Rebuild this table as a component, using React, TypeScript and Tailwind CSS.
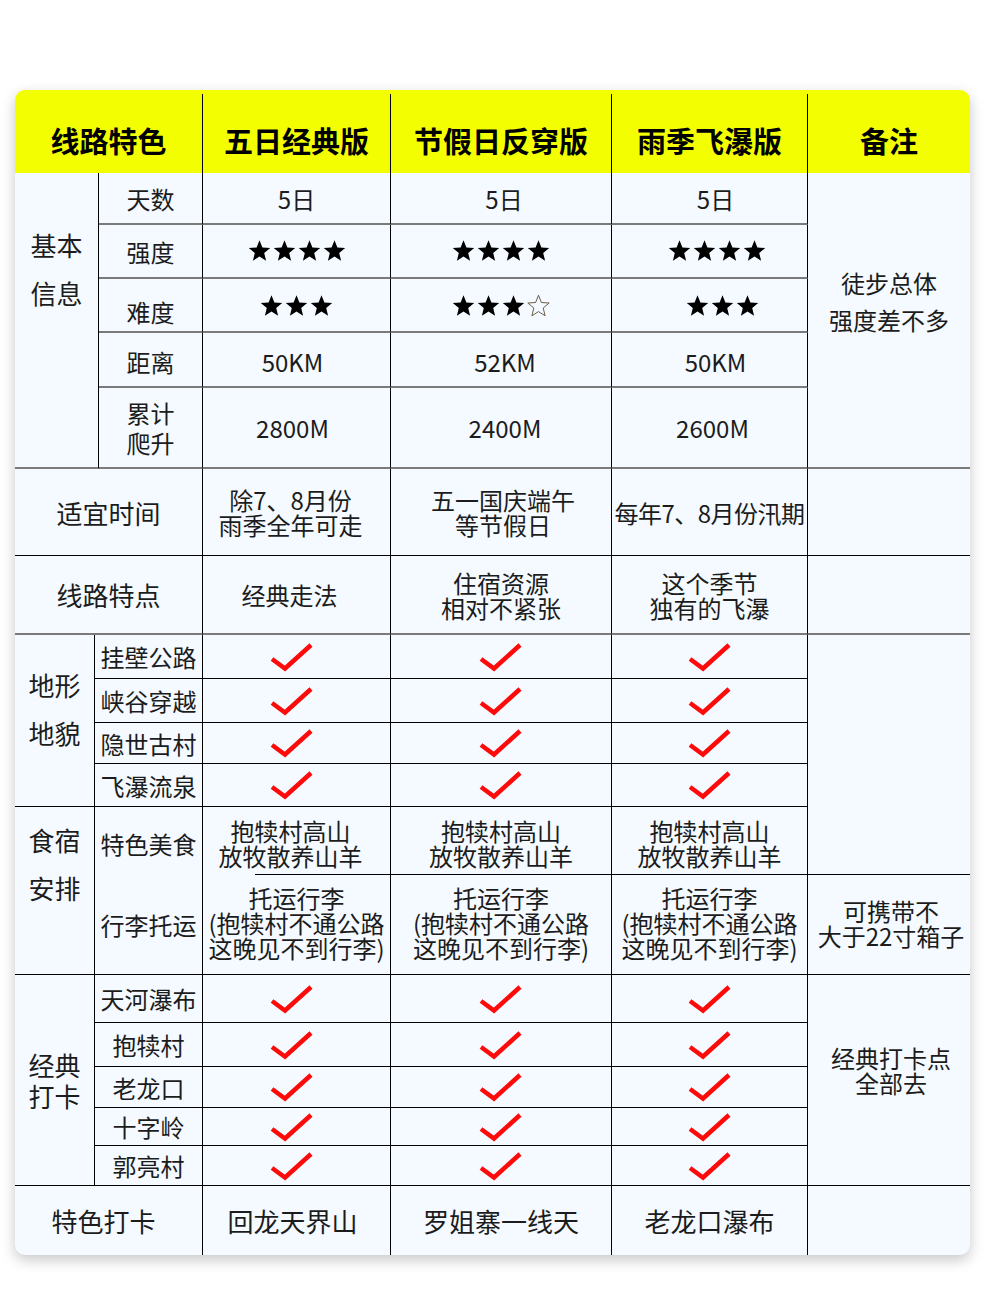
import type { ReactNode } from 'react';

const base = 'flex flex-col items-center justify-center text-center';

function Cell({ className, children }: { className: string; children?: ReactNode }) {
  return <div className={`${base} ${className}`}>{children}</div>;
}

function Star({ filled = true }: { filled?: boolean }) {
  return (
    <svg width="25" height="24" viewBox="0 0 24 24">
      <polygon
        points="12,1.2 14.9,8.5 22.7,9 16.7,14 18.6,21.8 12,17.6 5.4,21.8 7.3,14 1.3,9 9.1,8.5"
        fill={filled ? '#000' : 'none'}
        stroke={filled ? 'none' : '#6b5f45'}
        strokeWidth="1"
      />
    </svg>
  );
}

function Stars({ n, empty = 0 }: { n: number; empty?: number }) {
  return (
    <div className="flex">
      {Array.from({ length: n }).map((_, i) => (
        <Star key={i} />
      ))}
      {Array.from({ length: empty }).map((_, i) => (
        <Star key={`e${i}`} filled={false} />
      ))}
    </div>
  );
}

function Check() {
  return (
    <svg width="44" height="30" viewBox="0 0 44 30">
      <polyline points="2,17 15,26.5 41,3" fill="none" stroke="#ff0a0a" strokeWidth="4.5" />
    </svg>
  );
}

const rB = 'border-r border-r-black';
const bGray = 'border-b-2 border-b-[#7a7a7a]';
const bBlack = 'border-b border-b-black';

const terrain = [
  { row: 'row-[9]', name: '挂壁公路' },
  { row: 'row-[10]', name: '峡谷穿越' },
  { row: 'row-[11]', name: '隐世古村' },
  { row: 'row-[12]', name: '飞瀑流泉' },
];

const spots = [
  { row: 'row-[15]', name: '天河瀑布' },
  { row: 'row-[16]', name: '抱犊村' },
  { row: 'row-[17]', name: '老龙口' },
  { row: 'row-[18]', name: '十字岭' },
  { row: 'row-[19]', name: '郭亮村' },
];

const luggage = (
  <>
    <span>托运行李</span>
    <span>(抱犊村不通公路</span>
    <span>这晚见不到行李)</span>
  </>
);

export default function App() {
  return (
    <div className="w-[1000px] h-[1308px] bg-white pt-[90px] pl-[15px] font-['Noto_Sans_CJK_SC','Noto_Sans',sans-serif] text-[#1c1c1c]">
      <div className="w-[955px] rounded-[10px] overflow-hidden bg-[#f4faff] shadow-[0_5px_14px_rgba(0,0,0,0.22)]">
        <div className="grid grid-cols-[80px_4px_104px_188px_221px_196px_162px] grid-rows-[83px_52px_54px_54px_55px_81px_87px_79px_44px_44px_41px_43px_68px_100px_48px_44px_41px_38px_40px_69px] text-[24px] leading-[25px]">
          {/* Header */}
          {[
            { c: 'col-[1/span_3]', t: '线路特色', line: true },
            { c: 'col-[4]', t: '五日经典版', line: true },
            { c: 'col-[5]', t: '节假日反穿版', line: true },
            { c: 'col-[6]', t: '雨季飞瀑版', line: true },
            { c: 'col-[7]', t: '备注', line: false },
          ].map((h) => (
            <div key={h.t} className={`${h.c} row-[1] bg-[#f3ff00] pt-[4px] flex`}>
              <div
                className={`flex-1 flex items-center justify-center pt-[14px] text-[29px] font-bold text-black ${
                  h.line ? rB : ''
                }`}
              >
                {h.t}
              </div>
            </div>
          ))}

          {/* 基本信息 */}
          <Cell className={`col-[1/span_2] row-[2/span_5] justify-start pt-[48px] text-[26px] leading-[48px] ${rB} ${bGray}`}>
            <span>基本</span>
            <span>信息</span>
          </Cell>
          <Cell className={`col-[3] row-[2] ${rB} ${bGray}`}>天数</Cell>
          <Cell className={`col-[3] row-[3] ${rB} ${bGray}`}>强度</Cell>
          <Cell className={`col-[3] row-[4] pt-[12px] ${rB} ${bGray}`}>难度</Cell>
          <Cell className={`col-[3] row-[5] pt-[4px] ${rB} ${bGray}`}>距离</Cell>
          <Cell className={`col-[3] row-[6] leading-[30px] ${rB} ${bGray}`}>
            <span>累计</span>
            <span>爬升</span>
          </Cell>

          <Cell className={`col-[4] row-[2] ${rB} ${bGray}`}>5日</Cell>
          <Cell className={`col-[5] row-[2] pl-[6px] ${rB} ${bGray}`}>5日</Cell>
          <Cell className={`col-[6] row-[2] pl-[12px] ${rB} ${bGray}`}>5日</Cell>

          <Cell className={`col-[4] row-[3] ${rB} ${bGray}`}>
            <Stars n={4} />
          </Cell>
          <Cell className={`col-[5] row-[3] ${rB} ${bGray}`}>
            <Stars n={4} />
          </Cell>
          <Cell className={`col-[6] row-[3] pl-[14px] ${rB} ${bGray}`}>
            <Stars n={4} />
          </Cell>

          <Cell className={`col-[4] row-[4] pt-[2px] ${rB} ${bGray}`}>
            <Stars n={3} />
          </Cell>
          <Cell className={`col-[5] row-[4] pt-[2px] ${rB} ${bGray}`}>
            <Stars n={3} empty={1} />
          </Cell>
          <Cell className={`col-[6] row-[4] pt-[2px] pl-[26px] ${rB} ${bGray}`}>
            <Stars n={3} />
          </Cell>

          <Cell className={`col-[4] row-[5] pt-[4px] pr-[8px] ${rB} ${bGray}`}>50KM</Cell>
          <Cell className={`col-[5] row-[5] pt-[4px] pl-[8px] ${rB} ${bGray}`}>52KM</Cell>
          <Cell className={`col-[6] row-[5] pt-[4px] pl-[12px] ${rB} ${bGray}`}>50KM</Cell>

          <Cell className={`col-[4] row-[6] pr-[8px] ${rB} ${bGray}`}>2800M</Cell>
          <Cell className={`col-[5] row-[6] pl-[8px] ${rB} ${bGray}`}>2400M</Cell>
          <Cell className={`col-[6] row-[6] pl-[6px] ${rB} ${bGray}`}>2600M</Cell>

          <Cell className={`col-[7] row-[2/span_5] justify-start pt-[91px] leading-[37px] ${bGray}`}>
            <span>徒步总体</span>
            <span>强度差不多</span>
          </Cell>

          {/* 适宜时间 */}
          <Cell className={`col-[1/span_3] row-[7] text-[26px] ${rB} ${bBlack}`}>适宜时间</Cell>
          <Cell className={`col-[4] row-[7] pr-[12px] ${rB} ${bBlack}`}>
            <span>除7、8月份</span>
            <span>雨季全年可走</span>
          </Cell>
          <Cell className={`col-[5] row-[7] pl-[4px] ${rB} ${bBlack}`}>
            <span>五一国庆端午</span>
            <span>等节假日</span>
          </Cell>
          <Cell className={`col-[6] row-[7] tracking-[-0.5px] ${rB} ${bBlack}`}>每年7、8月份汛期</Cell>
          <Cell className={`col-[7] row-[7] ${bBlack}`} />

          {/* 线路特点 */}
          <Cell className={`col-[1/span_3] row-[8] text-[26px] ${rB} ${bGray}`}>线路特点</Cell>
          <Cell className={`col-[4] row-[8] pr-[14px] ${rB} ${bGray}`}>经典走法</Cell>
          <Cell className={`col-[5] row-[8] ${rB} ${bGray}`}>
            <span>住宿资源</span>
            <span>相对不紧张</span>
          </Cell>
          <Cell className={`col-[6] row-[8] ${rB} ${bGray}`}>
            <span>这个季节</span>
            <span>独有的飞瀑</span>
          </Cell>
          <Cell className={`col-[7] row-[8] ${bGray}`} />

          {/* 地形地貌 */}
          <Cell className={`col-[1] row-[9/span_4] justify-start pt-[26px] text-[26px] leading-[48px] ${rB} ${bBlack}`}>
            <span>地形</span>
            <span>地貌</span>
          </Cell>
          {terrain.map((r) => (
            <div key={r.name} className="contents">
              <Cell className={`col-[2/span_2] ${r.row} ${rB} ${bBlack}`}>{r.name}</Cell>
              <Cell className={`col-[4] ${r.row} pr-[10px] ${rB} ${bBlack}`}>
                <Check />
              </Cell>
              <Cell className={`col-[5] ${r.row} ${rB} ${bBlack}`}>
                <Check />
              </Cell>
              <Cell className={`col-[6] ${r.row} ${rB} ${bBlack}`}>
                <Check />
              </Cell>
            </div>
          ))}
          <Cell className={`col-[7] row-[9/span_5] ${bBlack}`} />

          {/* 食宿安排 */}
          <Cell className={`col-[1] row-[13/span_2] justify-start pt-[9px] text-[26px] leading-[48px] ${rB} ${bBlack}`}>
            <span>食宿</span>
            <span>安排</span>
          </Cell>
          <Cell className={`col-[2/span_2] row-[13] pt-[4px] ${rB}`}>特色美食</Cell>
          <Cell className={`col-[2/span_2] row-[14] ${rB} ${bBlack}`}>行李托运</Cell>

          <div className={`col-[4] row-[13] flex flex-col ${rB}`}>
            <div className={`${base} flex-1 pt-[4px] pr-[12px]`}>
              <span>抱犊村高山</span>
              <span>放牧散养山羊</span>
            </div>
            <div className="h-px bg-black ml-[52px]" />
          </div>
          <Cell className={`col-[5] row-[13] pt-[4px] ${rB} ${bBlack}`}>
            <span>抱犊村高山</span>
            <span>放牧散养山羊</span>
          </Cell>
          <Cell className={`col-[6] row-[13] pt-[4px] ${rB} ${bBlack}`}>
            <span>抱犊村高山</span>
            <span>放牧散养山羊</span>
          </Cell>

          <Cell className={`col-[4] row-[14] pb-[4px] ${rB} ${bBlack}`}>{luggage}</Cell>
          <Cell className={`col-[5] row-[14] pb-[4px] ${rB} ${bBlack}`}>{luggage}</Cell>
          <Cell className={`col-[6] row-[14] pb-[4px] ${rB} ${bBlack}`}>{luggage}</Cell>
          <Cell className={`col-[7] row-[14] pb-[4px] pl-[4px] ${bBlack}`}>
            <span>可携带不</span>
            <span>大于22寸箱子</span>
          </Cell>

          {/* 经典打卡 */}
          <Cell className={`col-[1] row-[15/span_5] text-[26px] leading-[31px] ${rB} ${bBlack}`}>
            <span>经典</span>
            <span>打卡</span>
          </Cell>
          {spots.map((r) => (
            <div key={r.name} className="contents">
              <Cell className={`col-[2/span_2] ${r.row} ${rB} ${bBlack}`}>{r.name}</Cell>
              <Cell className={`col-[4] ${r.row} pr-[10px] ${rB} ${bBlack}`}>
                <Check />
              </Cell>
              <Cell className={`col-[5] ${r.row} ${rB} ${bBlack}`}>
                <Check />
              </Cell>
              <Cell className={`col-[6] ${r.row} ${rB} ${bBlack}`}>
                <Check />
              </Cell>
            </div>
          ))}
          <Cell className={`col-[7] row-[15/span_5] pb-[20px] pl-[4px] ${bBlack}`}>
            <span>经典打卡点</span>
            <span>全部去</span>
          </Cell>

          {/* 特色打卡 */}
          <Cell className={`col-[1/span_3] row-[20] pr-[10px] text-[26px] ${rB}`}>特色打卡</Cell>
          <Cell className={`col-[4] row-[20] pr-[8px] text-[26px] ${rB}`}>回龙天界山</Cell>
          <Cell className={`col-[5] row-[20] text-[26px] ${rB}`}>罗姐寨一线天</Cell>
          <Cell className={`col-[6] row-[20] text-[26px] ${rB}`}>老龙口瀑布</Cell>
          <Cell className="col-[7] row-[20]" />
        </div>
      </div>
    </div>
  );
}
